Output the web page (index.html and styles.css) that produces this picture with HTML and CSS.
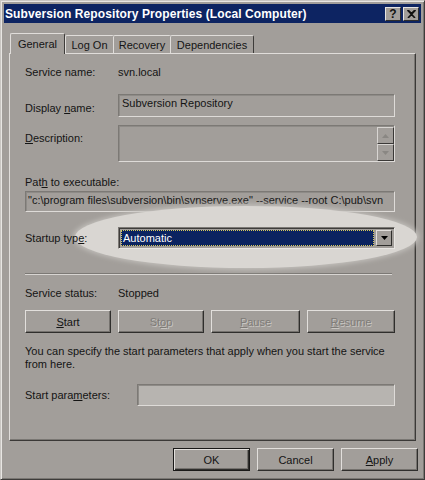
FILE: index.html
```html
<!DOCTYPE html>
<html>
<head>
<meta charset="utf-8">
<link rel="stylesheet" href="styles.css">
</head>
<body>
<div class="window">
  <div class="titlebar">
    <span class="title">Subversion Repository Properties (Local Computer)</span>
    <div class="caption-btns">
      <span class="cbtn">?</span>
      <span class="cbtn">
        <svg width="9" height="8" viewBox="0 0 9 8"><path d="M1 0 L4.5 3.5 L8 0 M1 8 L4.5 4.5 L8 8 M0.5 0 L8 8 M8.5 0 L1 8" stroke="#111" stroke-width="1.6" fill="none"/></svg>
      </span>
    </div>
  </div>
  <div class="tabs">
    <div class="tab active">General</div>
    <div class="tab">Log On</div>
    <div class="tab">Recovery</div>
    <div class="tab">Dependencies</div>
  </div>
  <div class="panel">
    <div class="row r-name">
      <span class="label">Service name:</span>
      <span class="value">svn.local</span>
    </div>
    <div class="row r-display">
      <span class="label">Display <u>n</u>ame:</span>
      <div class="field field-display">Subversion Repository</div>
    </div>
    <div class="row r-desc">
      <span class="label"><u>D</u>escription:</span>
      <div class="field field-desc">
        <div class="scroll">
          <span class="sbtn"><svg width="7" height="4" viewBox="0 0 7 4"><path d="M3.5 0 L7 4 L0 4Z" fill="#8a8783"/></svg></span>
          <span class="sbtn"><svg width="7" height="4" viewBox="0 0 7 4"><path d="M0 0 L7 0 L3.5 4Z" fill="#8a8783"/></svg></span>
        </div>
      </div>
    </div>
    <div class="path-label">Pat<u>h</u> to executable:</div>
    <div class="field field-path">"c:\program files\subversion\bin\svnserve.exe" --service --root C:\pub\svn</div>
    <div class="row r-startup">
      <div class="glow"></div>
      <span class="label">Startup typ<u>e</u>:</span>
      <div class="combo">
        <span class="combo-val">Automatic</span>
        <span class="combo-btn"><svg width="7" height="4" viewBox="0 0 7 4"><path d="M0 0 L7 0 L3.5 4Z" fill="#000"/></svg></span>
      </div>
    </div>
    <div class="sep"></div>
    <div class="row r-status">
      <span class="label">Service status:</span>
      <span class="value">Stopped</span>
    </div>
    <div class="btn-row">
      <div class="btn"><u>S</u>tart</div>
      <div class="btn disabled">St<u>o</u>p</div>
      <div class="btn disabled"><u>P</u>ause</div>
      <div class="btn disabled"><u>R</u>esume</div>
    </div>
    <p class="note">You can specify the start parameters that apply when you start the service from here.</p>
    <div class="row r-params">
      <span class="label">Start para<u>m</u>eters:</span>
      <div class="field field-params"></div>
    </div>
  </div>
  <div class="footer">
    <div class="btn fbtn default">OK</div>
    <div class="btn fbtn">Cancel</div>
    <div class="btn fbtn"><u>A</u>pply</div>
  </div>
</div>
</body>
</html>
```
FILE: styles.css
```css
* { box-sizing: border-box; }
html, body { margin: 0; padding: 0; background: #a29e9a; }
body {
  font-family: "Liberation Sans", Arial, sans-serif;
  font-size: 11px;
  color: #141414;
}
.window {
  width: 425px;
  height: 480px;
  background: #a29e9a;
  border: 1px solid;
  border-color: #c9c6c2 #3e3c3a #3e3c3a #c9c6c2;
  box-shadow: inset 1px 1px 0 #e8e6e3, inset -1px -1px 0 #7a7773;
  padding: 3px 3px 0 3px;
  display: flex;
  flex-direction: column;
}
.titlebar {
  height: 19px;
  background: #0d2462;
  display: flex;
  align-items: center;
  justify-content: space-between;
  padding: 0 2px 0 1px;
}
.title {
  color: #fff;
  font-weight: bold;
  font-size: 12px;
  letter-spacing: 0.1px;
}
.caption-btns { display: flex; gap: 2px; }
.cbtn {
  width: 16px;
  height: 14px;
  background: #a29e9a;
  border: 1px solid;
  border-color: #e6e4e1 #2f2e2c #2f2e2c #e6e4e1;
  display: flex;
  align-items: center;
  justify-content: center;
  font-weight: bold;
  font-size: 12px;
  color: #111;
  line-height: 1;
}
.tabs {
  display: flex;
  margin-top: 10px;
  padding-left: 6px;
  height: 20px;
  align-items: flex-end;
}
.tab {
  height: 18px;
  padding: 0 5px;
  border: 1px solid;
  border-bottom: none;
  border-color: #e0ddda #3e3c3a #3e3c3a #e0ddda;
  border-radius: 2px 2px 0 0;
  display: flex;
  align-items: center;
  font-size: 11px;
  color: #151515;
}
.tab.active {
  height: 21px;
  padding: 0 6px 0 6px;
  margin-bottom: -1px;
  background: #a29e9a;
  position: relative;
  z-index: 2;
  width: 55px;
  justify-content: center;
}
.tab:not(.active) { margin-left: -1px; }
.tab:nth-child(2) { margin-left: 0; width: 49px; justify-content: center; }
.tab:nth-child(3) { width: 58px; justify-content: center; }
.tab:nth-child(4) { width: 84px; justify-content: center; }
.panel {
  margin-left: 5px;
  width: 407px;
  height: 388px;
  border: 1px solid;
  border-color: #e0ddda #3b3937 #3b3937 #e0ddda;
  box-shadow: inset -1px -1px 0 #7a7773;
  padding: 10px 18px 0 15px;
  display: flex;
  flex-direction: column;
}
.row { display: flex; align-items: center; position: relative; }
.label { width: 93px; flex: none; }
.value { }
.r-name { height: 14px; margin-top: 1px; }
.field {
  background: #a29e9a;
  border: 1px solid;
  border-color: #7c7975 #dedbd8 #dedbd8 #7c7975;
  box-shadow: inset 1px 1px 0 #8e8b87;
  padding: 2px 3px;
}
.r-display { margin-top: 15px; align-items: flex-start; }
.r-display .label { margin-top: 8px; }
.field-display { width: 277px; height: 23px; padding-top: 2px; }
.r-desc { margin-top: 8px; align-items: flex-start; }
.r-desc .label { margin-top: 7px; }
.field-desc {
  width: 277px;
  height: 37px;
  padding: 0;
  display: flex;
  justify-content: flex-end;
}
.scroll { display: flex; flex-direction: column; margin: 1px 0 0 0; }
.sbtn {
  width: 17px;
  height: 17px;
  border: 1px solid;
  border-color: #d8d5d2 #3b3937 #3b3937 #d8d5d2;
  display: flex;
  align-items: center;
  justify-content: center;
  background: #a29e9a;
}
.path-label { margin-top: 14px; height: 14px; }
.field-path {
  margin-top: 1px;
  width: 370px;
  height: 21px;
  white-space: nowrap;
  overflow: hidden;
  padding: 2px 2px;
  color: #161616;
}
.r-startup { margin-top: 15px; height: 22px; }
.glow {
  position: absolute;
  left: 50px;
  top: -21px;
  width: 342px;
  height: 62px;
  border-radius: 50%;
  background: #d9d6d2;
  box-shadow: 0 0 5px 2px #c3c0bc;
  z-index: 0;
}
.r-startup .label, .r-startup .combo { position: relative; z-index: 1; }
.combo {
  width: 277px;
  height: 22px;
  background: #a29e9a;
  border: 1px solid;
  border-color: #7c7975 #e8e6e3 #e8e6e3 #7c7975;
  box-shadow: inset 1px 1px 0 #3e3c3a;
  display: flex;
  padding: 2px 2px 2px 2px;
}
.combo-val {
  flex: 1;
  background: #0b2360;
  color: #fff;
  outline: 1px dotted #d7c85a;
  outline-offset: -1px;
  padding-left: 2px;
  display: flex;
  align-items: center;
  margin-right: 2px;
}
.combo-btn {
  width: 16px;
  background: #a29e9a;
  border: 1px solid;
  border-color: #e2dfdc #2f2e2c #2f2e2c #e2dfdc;
  display: flex;
  align-items: center;
  justify-content: center;
}
.sep {
  margin-top: 24px;
  width: 367px;
  height: 2px;
  border-top: 1px solid #7c7975;
  border-bottom: 1px solid #d8d5d2;
}
.r-status { margin-top: 11px; height: 14px; }
.btn-row { display: flex; gap: 7px; margin-top: 10px; }
.btn {
  width: 86px;
  height: 23px;
  border: 1px solid;
  border-color: #e2dfdc #2f2e2c #2f2e2c #e2dfdc;
  box-shadow: inset -1px -1px 0 #75726e;
  display: flex;
  align-items: center;
  justify-content: center;
  color: #141414;
  background: #a29e9a;
}
.btn-row .btn:nth-child(3) { width: 89px; }
.btn-row .btn:nth-child(4) { width: 88px; }
.btn.disabled { color: #7f7c78; text-shadow: 1px 1px 0 #c9c6c2; }
.note { margin: 12px 0 0 0; line-height: 13px; width: 365px; }
.r-params { margin-top: 13px; }
.r-params .label { width: 112px; }
.field-params { width: 258px; height: 22px; background: #b7b4b0; }
.footer {
  display: flex;
  justify-content: flex-end;
  gap: 7px;
  margin-top: 7px;
  padding-right: 3px;
}
.fbtn { width: 77px; height: 23px; }
.fbtn.default {
  border: 1px solid #1a1918;
  box-shadow: inset 1px 1px 0 #e2dfdc, inset -1px -1px 0 #2f2e2c, inset -2px -2px 0 #75726e;
}
```
